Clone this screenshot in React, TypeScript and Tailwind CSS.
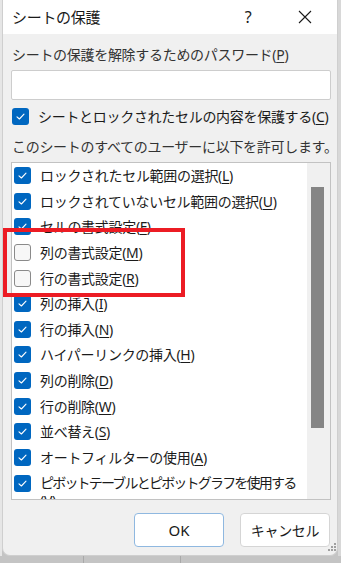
import React from 'react';

const font = { fontFamily: '"Noto Sans", "Noto Sans CJK JP", sans-serif' };

type Item = { label: string; key: string; checked: boolean };

const items: Item[] = [
  { label: 'ロックされたセル範囲の選択', key: 'L', checked: true },
  { label: 'ロックされていないセル範囲の選択', key: 'U', checked: true },
  { label: 'セルの書式設定', key: 'F', checked: true },
  { label: '列の書式設定', key: 'M', checked: false },
  { label: '行の書式設定', key: 'R', checked: false },
  { label: '列の挿入', key: 'I', checked: true },
  { label: '行の挿入', key: 'N', checked: true },
  { label: 'ハイパーリンクの挿入', key: 'H', checked: true },
  { label: '列の削除', key: 'D', checked: true },
  { label: '行の削除', key: 'W', checked: true },
  { label: '並べ替え', key: 'S', checked: true },
  { label: 'オートフィルターの使用', key: 'A', checked: true },
];

function Check({ checked }: { checked: boolean }) {
  if (!checked) {
    return (
      <span className="w-[17px] h-[17px] shrink-0 rounded-[3px] border border-[#8a8a8a] bg-[#f7f7f7]" />
    );
  }
  return (
    <span className="w-[17px] h-[17px] shrink-0 rounded-[3px] bg-[#0067c0] flex items-center justify-center">
      <svg width="11" height="11" viewBox="0 0 11 11" fill="none">
        <path d="M2 5.8 L4.4 8 L9 3.2" stroke="white" strokeWidth="1.1" strokeLinecap="round" strokeLinejoin="round" />
      </svg>
    </span>
  );
}

function Label({ text, k }: { text: string; k: string }) {
  return (
    <span className="whitespace-nowrap">
      {text}(<span className="underline underline-offset-2 decoration-1">{k}</span>)
    </span>
  );
}

export default function App() {
  return (
    <div
      className="relative w-[341px] h-[563px] overflow-hidden bg-[#c4c4c4] text-[14px] text-[#1b1b1b] tracking-[-0.3px]"
      style={font}
    >
      {/* faint sheet grid below dialog */}
      <div className="absolute left-[83px] top-[556px] w-px h-[8px] bg-[#a9a9a9]" />
      <div className="absolute left-[180px] top-[556px] w-px h-[8px] bg-[#a9a9a9]" />

      <div className="flex">
        <div className="w-[2px] h-[556px] bg-[#e6e6e6]" />
        <div className="w-[336px] h-[556px] flex flex-col bg-[#f0f0f0] border-x border-b border-[#cfcfcf] rounded-b-[8px] overflow-hidden">
          {/* title bar */}
          <div className="h-[34px] shrink-0 bg-white flex items-center pl-[9px]">
            <span className="text-[15px] text-[#1a1a1a] flex-1">シートの保護</span>
            <span className="text-[16px] text-[#1a1a1a] w-[20px] text-center mr-[40px]">?</span>
            <svg width="14" height="14" viewBox="0 0 14 14" className="mr-[25px]">
              <path d="M1 1 L13 13 M13 1 L1 13" stroke="#1a1a1a" strokeWidth="1.1" />
            </svg>
          </div>

          {/* body */}
          <div className="flex flex-col pl-[8px] pr-[6px] pt-[11px]">
            <div className="h-[20px] leading-[20px] pl-[1px] text-[#333]">
              <Label text="シートの保護を解除するためのパスワード" k="P" />
            </div>
            <div className="mt-[5px] h-[30px] bg-white border border-[#cdcdcd] rounded-[2px]" />

            <div className="mt-[8px] h-[17px] flex items-center gap-[9px] pl-[1px]">
              <Check checked />
              <Label text="シートとロックされたセルの内容を保護する" k="C" />
            </div>

            <div className="mt-[12px] h-[20px] leading-[20px] pl-[1px] text-[#333] whitespace-nowrap">
              このシートのすべてのユーザーに以下を許可します。
            </div>

            <div className="mt-[5px] h-[338px] bg-white border border-[#c2c2c2] flex overflow-hidden">
              <div className="flex-1 min-w-0 flex flex-col overflow-hidden">
                {items.map((it) => (
                  <div key={it.key} className="h-[25.6px] shrink-0 flex items-center gap-[9px] pl-[2px]">
                    <Check checked={it.checked} />
                    <Label text={it.label} k={it.key} />
                  </div>
                ))}
                <div className="shrink-0 flex gap-[9px] pl-[2px] pt-[4px]">
                  <span className="mt-[1px]">
                    <Check checked />
                  </span>
                  <span className="min-w-0 leading-[18px]">
                    <span className="whitespace-nowrap tracking-[-1.8px]">ピボットテーブルとピボットグラフを使用する</span>
                    <br />
                    (<span className="underline underline-offset-2 decoration-1">V</span>)
                  </span>
                </div>
              </div>
              <div className="w-[23px] shrink-0 bg-[#f0f0f0] pt-[24px] pl-[4px]">
                <div className="w-[13px] h-[241px] bg-[#858585]" />
              </div>
            </div>

            <div className="mt-[13px] flex justify-end gap-[16px] pr-[1px]">
              <button className="w-[90px] h-[34px] bg-white border border-[#8fb8e0] rounded-[4px] text-[15px] text-[#1a1a1a] tracking-normal">
                OK
              </button>
              <button className="w-[90px] h-[34px] bg-white border border-[#d5d5d5] rounded-[4px] text-[14px] text-[#1a1a1a]">
                キャンセル
              </button>
            </div>
          </div>
        </div>
        <div className="w-[3px] h-[556px] bg-[#d8d8d8]" />
      </div>

      {/* resize grip */}
      <div className="absolute left-[328px] top-[543px] grid grid-cols-3 gap-[1px]">
        <span />
        <span />
        <span className="w-[2px] h-[2px] bg-[#a0a0a0]" />
        <span />
        <span className="w-[2px] h-[2px] bg-[#a0a0a0]" />
        <span className="w-[2px] h-[2px] bg-[#a0a0a0]" />
        <span className="w-[2px] h-[2px] bg-[#a0a0a0]" />
        <span className="w-[2px] h-[2px] bg-[#a0a0a0]" />
        <span className="w-[2px] h-[2px] bg-[#a0a0a0]" />
      </div>

      {/* red highlight */}
      <div className="absolute left-[3px] top-[228px] w-[182px] h-[69px] border-[4px] border-[#ec1c24]" />
    </div>
  );
}
